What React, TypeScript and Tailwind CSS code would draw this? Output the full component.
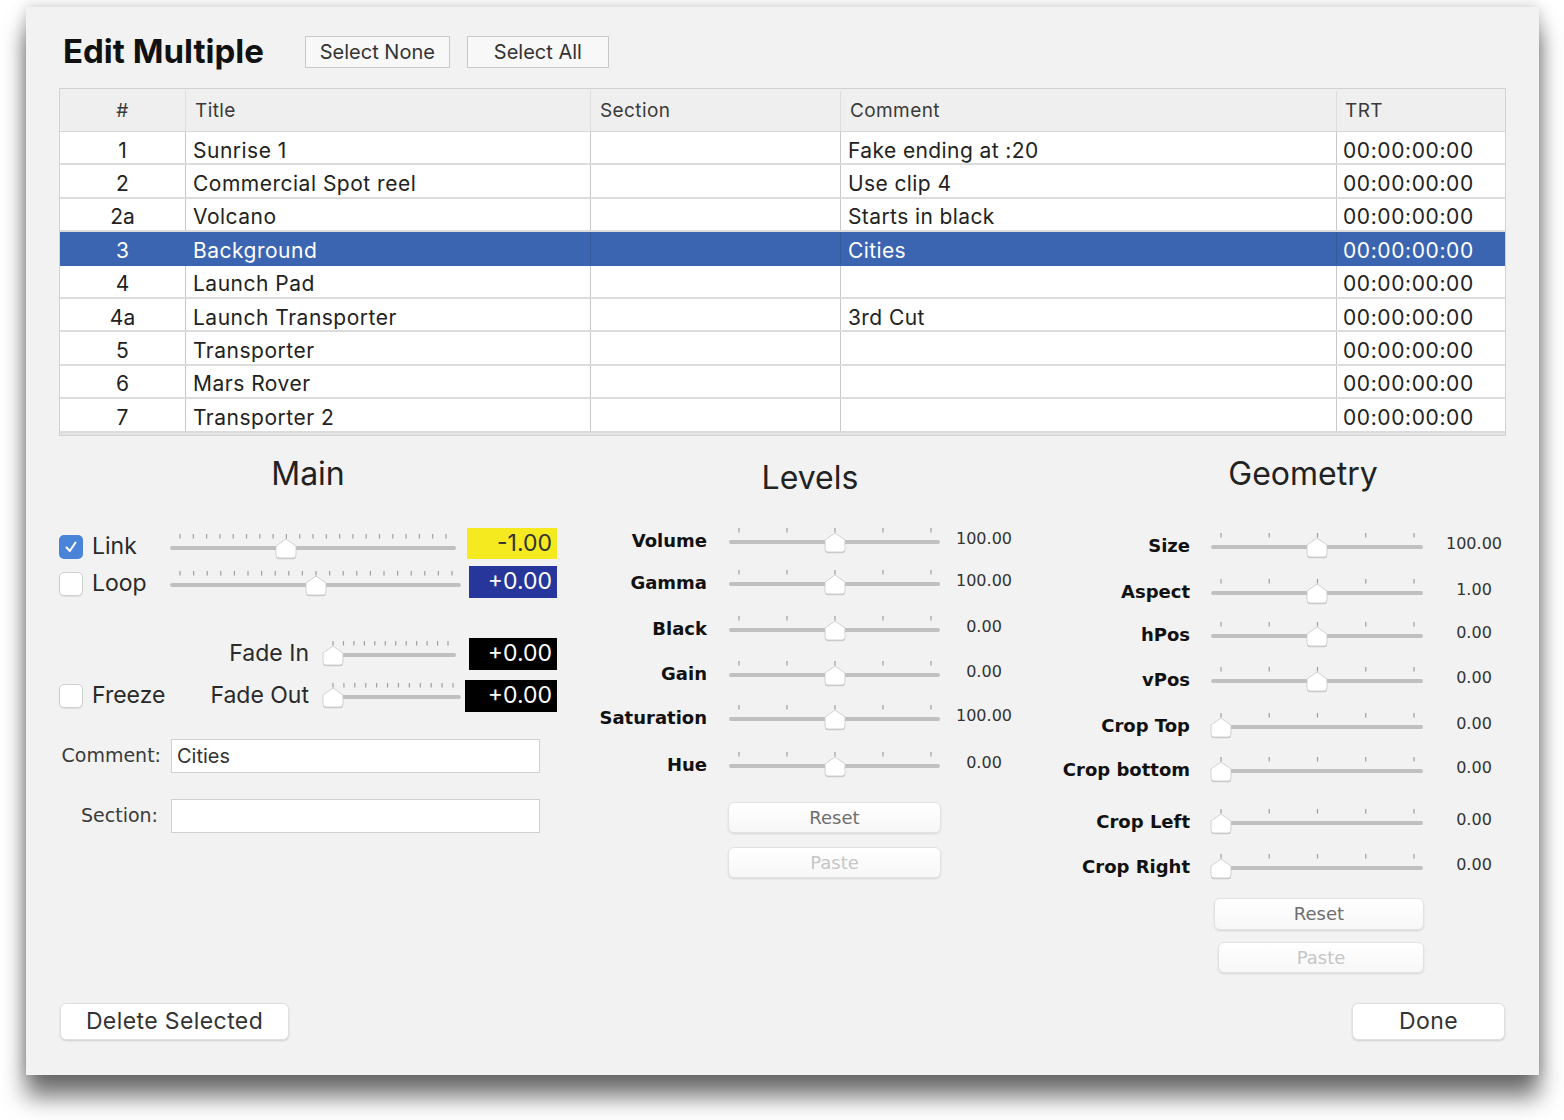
import React from 'react';

const SF = "font-['Inter','Liberation_Sans',sans-serif]";
const LG = "font-['DejaVu_Sans','Liberation_Sans',sans-serif]";

type SliderProps = { width: number; ticks: number; tickStart: number; tickEnd: number; pos: number };

const Slider = ({ width, ticks, tickStart, tickEnd, pos }: SliderProps) => {
  const step = ticks > 1 ? (tickEnd - tickStart) / (ticks - 1) : 0;
  const t = Array.from({ length: ticks }, (_, i) => tickStart + i * step);
  const thumb = `M${pos} 5 L${pos + 10} 12 L${pos + 10} 21 Q${pos + 10} 24 ${pos + 7} 24 L${pos - 7} 24 Q${pos - 10} 24 ${pos - 10} 21 L${pos - 10} 12 Z`;
  return (
    <svg width={width} height={26} viewBox={`0 0 ${width} 26`} className="shrink-0 overflow-visible">
      {t.map((x, i) => (
        <rect key={i} x={x - 0.6} y={0} width={1.2} height={4.5} fill="#a0a0a0" />
      ))}
      <rect x={0} y={12} width={width} height={4} rx={2} fill="#c0c0c0" />
      <path d={thumb} transform="translate(0 1.2)" fill="#000" opacity={0.16} />
      <path d={thumb} fill="#ffffff" stroke="#c8c8c8" strokeWidth={0.8} />
    </svg>
  );
};

const Checkbox = ({ checked }: { checked?: boolean }) =>
  checked ? (
    <div className="w-[24px] h-[24px] rounded-[5px] bg-[#4a84d8] flex items-center justify-center shrink-0">
      <svg width="16" height="16" viewBox="0 0 16 16">
        <path d="M3.5 8.5 L6.8 12 L12.5 3.5" fill="none" stroke="#fff" strokeWidth="2" strokeLinecap="round" strokeLinejoin="round" />
      </svg>
    </div>
  ) : (
    <div className="w-[24px] h-[24px] rounded-[5px] bg-white border border-[#cfcfcf] shadow-[0_1px_1px_rgba(0,0,0,0.08)] shrink-0" />
  );

const rows = [
  { n: '1', title: 'Sunrise 1', comment: 'Fake ending at :20' },
  { n: '2', title: 'Commercial Spot reel', comment: 'Use clip 4' },
  { n: '2a', title: 'Volcano', comment: 'Starts in black' },
  { n: '3', title: 'Background', comment: 'Cities', selected: true },
  { n: '4', title: 'Launch Pad', comment: '' },
  { n: '4a', title: 'Launch Transporter', comment: '3rd Cut' },
  { n: '5', title: 'Transporter', comment: '' },
  { n: '6', title: 'Mars Rover', comment: '' },
  { n: '7', title: 'Transporter 2', comment: '' },
];

const levels = [
  { label: 'Volume', value: '100.00', mt: 'mt-[26px]' },
  { label: 'Gamma', value: '100.00', mt: 'mt-[8px]' },
  { label: 'Black', value: '0.00', mt: 'mt-[12px]' },
  { label: 'Gain', value: '0.00', mt: 'mt-[11px]' },
  { label: 'Saturation', value: '100.00', mt: 'mt-[10px]' },
  { label: 'Hue', value: '0.00', mt: 'mt-[13px]' },
];

const geometry = [
  { label: 'Size', value: '100.00', pos: 106, mt: 'mt-[35px]' },
  { label: 'Aspect', value: '1.00', pos: 106, mt: 'mt-[12px]' },
  { label: 'hPos', value: '0.00', pos: 106, mt: 'mt-[9px]' },
  { label: 'vPos', value: '0.00', pos: 106, mt: 'mt-[11px]' },
  { label: 'Crop Top', value: '0.00', pos: 10, mt: 'mt-[12px]' },
  { label: 'Crop bottom', value: '0.00', pos: 10, mt: 'mt-[10px]' },
  { label: 'Crop Left', value: '0.00', pos: 10, mt: 'mt-[18px]' },
  { label: 'Crop Right', value: '0.00', pos: 10, mt: 'mt-[11px]' },
];

const SoftButton = ({ label, disabled, className }: { label: string; disabled?: boolean; className: string }) => (
  <div
    className={`${className} ${LG} rounded-[6px] bg-gradient-to-b from-white to-[#f7f7f7] border border-[#e2e2e2] shadow-[0_1px_2px_rgba(0,0,0,0.12)] flex items-center justify-center text-[18px] ${disabled ? 'text-[#c6c6c6]' : 'text-[#6e6e6e]'}`}
  >
    {label}
  </div>
);

const App = () => {
  return (
    <div className="min-h-screen w-full bg-white pt-[7px] pl-[26px]">
      <div className={`${SF} w-[1513px] h-[1068px] bg-[#f2f2f2] px-[33px] pt-[29px] pb-[35px] flex flex-col text-[#262626] shadow-[0_22px_22px_rgba(0,0,0,0.55),0_0_14px_rgba(0,0,0,0.22)]`}>
        {/* header */}
        <div className="flex items-center h-[32px]">
          <h1 className="ml-[4px] text-[33px] font-bold text-[#111]">Edit Multiple</h1>
          <div className="ml-[41px] w-[145px] h-[32px] bg-[#f8f8f8] border border-[#c9c9c9] flex items-center justify-center text-[20px] text-[#333]">
            Select None
          </div>
          <div className="ml-[17px] w-[142px] h-[32px] bg-[#f8f8f8] border border-[#c9c9c9] flex items-center justify-center text-[20px] text-[#333]">
            Select All
          </div>
        </div>

        {/* table */}
        <div className="mt-[20px] border border-[#d2d2d2] bg-white">
          <div className="grid grid-cols-[126px_405px_250px_496px_168px] h-[43px] pt-[2px] bg-[#efefef] border-b border-[#d6d6d6] text-[19px] tracking-[0.4px] text-[#3a3a3a]">
            <div className="flex items-center justify-center border-r border-[#dedede]">#</div>
            <div className="flex items-center pl-[9px] border-r border-[#dedede]">Title</div>
            <div className="flex items-center pl-[9px] border-r border-[#dedede]">Section</div>
            <div className="flex items-center pl-[9px] border-r border-[#dedede]">Comment</div>
            <div className="flex items-center pl-[8px]">TRT</div>
          </div>
          {rows.map((r) => (
            <div
              key={r.n}
              className={`grid grid-cols-[126px_405px_250px_496px_168px] h-[33.4px] border-b-2 text-[21px] leading-[21px] ${r.selected ? 'bg-[#3b65b0] text-white border-[#3b65b0]' : 'text-[#222] border-[#dcdcdc]'}`}
            >
              <div className={`flex items-center justify-center pt-[5px] border-r ${r.selected ? 'border-[#3b65b0]' : 'border-[#c9c9c9]'}`}>{r.n}</div>
              <div className={`flex items-center pt-[5px] pl-[7px] tracking-[0.5px] border-r ${r.selected ? 'border-[#35599c]' : 'border-[#c9c9c9]'}`}>{r.title}</div>
              <div className={`flex items-center pt-[5px] pl-[7px] border-r ${r.selected ? 'border-[#35599c]' : 'border-[#c9c9c9]'}`}></div>
              <div className={`flex items-center pt-[5px] pl-[7px] tracking-[0.4px] border-r ${r.selected ? 'border-[#35599c]' : 'border-[#c9c9c9]'}`}>{r.comment}</div>
              <div className="flex items-center pt-[5px] pl-[6px] tracking-[0.6px]">00:00:00:00</div>
            </div>
          ))}
          <div className="h-[2px] bg-[#e4e4e4]" />
        </div>

        {/* panels */}
        <div className="flex pt-[2px]">
          {/* Main */}
          <div className="w-[498px] flex flex-col">
            <div className="mt-[16px] h-[40px] text-center text-[32px] leading-[40px] text-[#222]">Main</div>

            <div className="mt-[36px] h-[34px] flex items-center">
              <div className="w-[111px] flex items-center">
                <Checkbox checked />
                <span className="ml-[9px] text-[23px] text-[#2a2a2a]">Link</span>
              </div>
              <Slider width={286} ticks={21} tickStart={10} tickEnd={276} pos={116} />
              <div className="ml-auto mb-[6px] w-[90px] h-[31px] bg-[#f4ea1f] flex items-center justify-end pr-[5px] text-[23px] text-[#333]">-1.00</div>
            </div>

            <div className="mt-[3px] h-[34px] flex items-center">
              <div className="w-[111px] flex items-center">
                <Checkbox />
                <span className="ml-[9px] text-[23px] text-[#2a2a2a]">Loop</span>
              </div>
              <Slider width={291} ticks={21} tickStart={10} tickEnd={282} pos={146} />
              <div className="ml-auto mb-[4px] w-[88px] h-[32px] bg-[#26369a] flex items-center justify-end pr-[5px] text-[23px] text-white">+0.00</div>
            </div>

            <div className="mt-[36px] h-[34px] flex items-center">
              <div className="w-[250px] text-right text-[23px] text-[#2a2a2a]">Fade In</div>
              <div className="ml-[14px]">
                <Slider width={133} ticks={12} tickStart={10} tickEnd={125} pos={10} />
              </div>
              <div className="ml-auto w-[88px] h-[32px] bg-black flex items-center justify-end pr-[5px] text-[23px] text-white">+0.00</div>
            </div>

            <div className="mt-[8px] h-[34px] flex items-center">
              <div className="w-[250px] flex items-center">
                <Checkbox />
                <span className="ml-[9px] text-[23px] text-[#2a2a2a]">Freeze</span>
                <span className="ml-auto text-[23px] text-[#2a2a2a]">Fade Out</span>
              </div>
              <div className="ml-[14px]">
                <Slider width={138} ticks={12} tickStart={10} tickEnd={130} pos={10} />
              </div>
              <div className="ml-auto w-[92px] h-[32px] bg-black flex items-center justify-end pr-[5px] text-[23px] text-white">+0.00</div>
            </div>

            <div className="mt-[26px] h-[34px] flex items-center">
              <div className={`${LG} w-[102px] text-right text-[19px] text-[#3a3a3a]`}>Comment:</div>
              <div className="ml-[10px] w-[369px] h-[34px] bg-white border border-[#d0d0d0] flex items-center pl-[5px] text-[20px] text-[#333]">Cities</div>
            </div>

            <div className="mt-[26px] h-[34px] flex items-center">
              <div className={`${LG} w-[99px] text-right text-[19px] text-[#3a3a3a]`}>Section:</div>
              <div className="ml-[13px] w-[369px] h-[34px] bg-white border border-[#d0d0d0]" />
            </div>
          </div>

          {/* Levels */}
          <div className="ml-[23px] w-[460px] flex flex-col">
            <div className="mt-[20px] h-[40px] text-center text-[32px] leading-[40px] text-[#222]">Levels</div>
            {levels.map((l) => (
              <div key={l.label} className={`${l.mt} h-[34px] flex items-center`}>
                <div className={`${LG} w-[127px] text-right text-[18px] font-bold text-[#111]`}>{l.label}</div>
                <div className="ml-[22px]">
                  <Slider width={211} ticks={5} tickStart={10} tickEnd={202} pos={106} />
                </div>
                <div className={`${LG} w-[88px] text-center text-[16px] text-[#333] mb-[3px]`}>{l.value}</div>
              </div>
            ))}
            <SoftButton label="Reset" className="mt-[20px] ml-[148px] w-[213px] h-[31px]" />
            <SoftButton label="Paste" disabled className="mt-[14px] ml-[148px] w-[213px] h-[31px]" />
          </div>

          {/* Geometry */}
          <div className="w-[466px] flex flex-col">
            <div className="mt-[16px] pl-[60px] h-[40px] text-center text-[32px] leading-[40px] text-[#222]">Geometry</div>
            {geometry.map((g) => (
              <div key={g.label} className={`${g.mt} h-[34px] flex items-center`}>
                <div className={`${LG} w-[150px] text-right text-[18px] font-bold text-[#111]`}>{g.label}</div>
                <div className="ml-[21px]">
                  <Slider width={212} ticks={5} tickStart={10} tickEnd={203} pos={g.pos} />
                </div>
                <div className={`${LG} ml-[19px] w-[64px] text-center text-[16px] text-[#333] mb-[3px]`}>{g.value}</div>
              </div>
            ))}
            <SoftButton label="Reset" className="mt-[14px] ml-[174px] w-[210px] h-[32px]" />
            <SoftButton label="Paste" disabled className="mt-[12px] ml-[178px] w-[206px] h-[31px]" />
          </div>
        </div>

        {/* footer */}
        <div className="mt-auto flex justify-between">
          <div className="ml-[1px] w-[229px] h-[37px] rounded-[6px] bg-white border border-[#e0e0e0] shadow-[0_1px_2px_rgba(0,0,0,0.15)] flex items-center justify-center text-[23px] tracking-[0.4px] text-[#333]">
            Delete Selected
          </div>
          <div className="mr-[1px] w-[153px] h-[37px] rounded-[6px] bg-white border border-[#e0e0e0] shadow-[0_1px_2px_rgba(0,0,0,0.15)] flex items-center justify-center text-[23px] tracking-[0.4px] text-[#333]">
            Done
          </div>
        </div>
      </div>
    </div>
  );
};

export default App;
